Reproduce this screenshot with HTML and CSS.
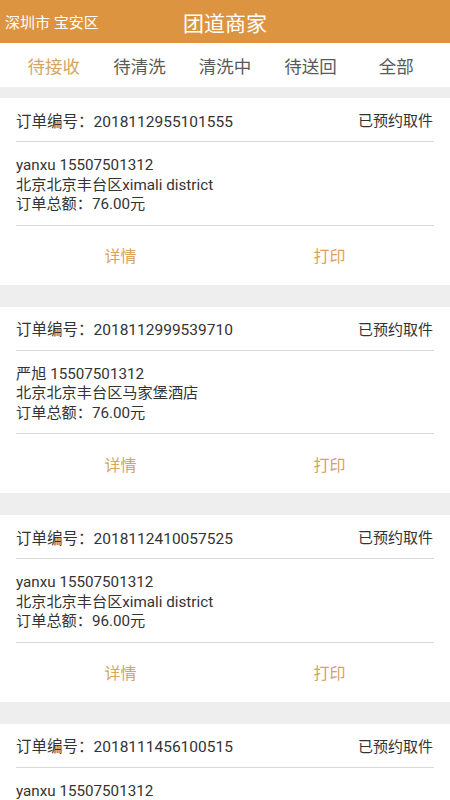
FILE: index.html
```html
<!DOCTYPE html>
<html lang="zh-CN">
<head>
<meta charset="utf-8">
<title>团道商家</title>
<link rel="stylesheet" href="styles.css">
</head>
<body>
<header class="topbar">
  <div class="loc">深圳市 宝安区</div>
  <div class="title">团道商家</div>
  <div class="spacer"></div>
</header>
<nav class="tabs">
  <div class="tab active">待接收</div>
  <div class="tab">待清洗</div>
  <div class="tab">清洗中</div>
  <div class="tab">待送回</div>
  <div class="tab">全部</div>
</nav>
<main class="list">
  <section class="card">
    <div class="card-head"><span>订单编号：2018112955101555</span><span class="status">已预约取件</span></div>
    <div class="card-body">
      <div>yanxu 15507501312</div>
      <div>北京北京丰台区ximali district</div>
      <div>订单总额：76.00元</div>
    </div>
    <div class="card-actions"><span>详情</span><span>打印</span></div>
  </section>
  <section class="card">
    <div class="card-head"><span>订单编号：2018112999539710</span><span class="status">已预约取件</span></div>
    <div class="card-body">
      <div>严旭 15507501312</div>
      <div>北京北京丰台区马家堡酒店</div>
      <div>订单总额：76.00元</div>
    </div>
    <div class="card-actions"><span>详情</span><span>打印</span></div>
  </section>
  <section class="card">
    <div class="card-head"><span>订单编号：2018112410057525</span><span class="status">已预约取件</span></div>
    <div class="card-body">
      <div>yanxu 15507501312</div>
      <div>北京北京丰台区ximali district</div>
      <div>订单总额：96.00元</div>
    </div>
    <div class="card-actions"><span>详情</span><span>打印</span></div>
  </section>
  <section class="card">
    <div class="card-head"><span>订单编号：2018111456100515</span><span class="status">已预约取件</span></div>
    <div class="card-body">
      <div>yanxu 15507501312</div>
      <div>北京北京丰台区ximali district</div>
      <div>订单总额：76.00元</div>
    </div>
    <div class="card-actions"><span>详情</span><span>打印</span></div>
  </section>
</main>
</body>
</html>
```
FILE: styles.css
```css
html, body {
  margin: 0;
  padding: 0;
}
body {
  width: 450px;
  height: 800px;
  overflow: hidden;
  background: #eeeeee;
  font-family: Roboto, "Noto Sans CJK SC", sans-serif;
  color: #333333;
}
.topbar {
  height: 43px;
  background: #dc9441;
  display: grid;
  grid-template-columns: 1fr auto 1fr;
  align-items: center;
  color: #ffffff;
}
.loc {
  font-size: 15px;
  padding-left: 5px;
  white-space: nowrap;
}
.title {
  font-size: 21px;
}
.tabs {
  height: 44px;
  background: #ffffff;
  display: grid;
  grid-template-columns: repeat(5, 1fr);
  align-items: center;
  padding: 1px 11px 0;
  box-sizing: border-box;
}
.tab {
  text-align: center;
  font-size: 17.5px;
  color: #5a5a5a;
}
.tab.active {
  color: #d4a565;
}
.list {
  padding-top: 11px;
}
.card {
  background: #ffffff;
  padding: 0 16px;
  margin-bottom: 22px;
}
.card-head {
  height: 43px;
  display: flex;
  justify-content: space-between;
  align-items: center;
  font-size: 15.5px;
  border-bottom: 1px solid #d9d9d9;
}
.status {
  font-size: 15px;
  margin-right: 1px;
}
.card-body {
  padding: 14px 0 10px;
  font-size: 15.2px;
  line-height: 19.5px;
  border-bottom: 1px solid #d9d9d9;
}
.card-actions {
  height: 59px;
  display: grid;
  grid-template-columns: 1fr 1fr;
  align-items: center;
  text-align: center;
  font-size: 16px;
  color: #d9a25d;
}
```
